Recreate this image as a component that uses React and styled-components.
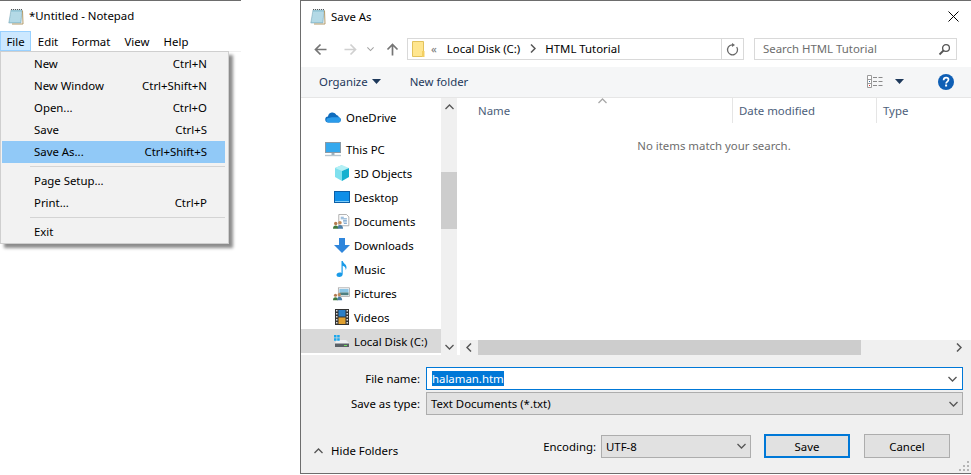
import React from "react";
import styled, { createGlobalStyle } from "styled-components";

const Global = createGlobalStyle`
  html, body { margin: 0; padding: 0; background: #fff; }
  * { box-sizing: border-box; }
  body { font-family: "Noto Sans", "Open Sans", sans-serif; font-size: 11.4px; color: #000; }
`;

const Page = styled.div`
  display: flex;
  width: 971px;
  height: 475px;
  background: #fff;
  overflow: hidden;
`;

/* ---------- Notepad ---------- */
const Notepad = styled.section`
  position: relative;
  width: 241px;
  height: 475px;
  border-top: 1px solid #6d6d6d;
  flex: none;
`;
const NotepadTitle = styled.div`
  display: flex;
  align-items: center;
  gap: 5px;
  height: 30px;
  padding: 0 0 0 8px;
  line-height: 16px;
`;
const MenuBar = styled.div`
  display: flex;
  height: 20px;
`;
const MenuTitle = styled.div`
  display: flex;
  align-items: center;
  justify-content: center;
  width: ${(p) => p.$w}px;
  height: 20px;
  background: ${(p) => (p.$open ? "#cce8ff" : "transparent")};
  border: 1px solid ${(p) => (p.$open ? "#99d1ff" : "transparent")};
`;
const MenuRule = styled.div`
  height: 1px;
  background: #f0f0f0;
`;
const DropMenu = styled.div`
  position: absolute;
  left: 0;
  top: 50px;
  width: 229px;
  height: 193px;
  padding: 1px 3px 0 1px;
  background: #f2f2f2;
  border: 1px solid #cfcfcf;
  box-shadow: 4px 4px 3px rgba(0, 0, 0, 0.45);
`;
const MenuItem = styled.div`
  display: flex;
  align-items: center;
  justify-content: space-between;
  height: 22px;
  padding: 0 18px 1px 32px;
  background: ${(p) => (p.$active ? "#91c9f7" : "transparent")};
`;
const MenuSep = styled.div`
  height: 1px;
  margin: 3px 0 3px 28px;
  background: #d4d4d4;
`;

/* ---------- Dialog ---------- */
const Dialog = styled.section`
  display: flex;
  flex-direction: column;
  width: 671px;
  height: 474px;
  margin-left: 59px;
  flex: none;
  border-top: 1px solid #6d6d6d;
  border-bottom: 1px solid #6d6d6d;
  border-left: 1px solid #6d6d6d;
`;
const DialogTitle = styled.div`
  display: flex;
  align-items: center;
  height: 31px;
  padding: 0 12px 0 9px;
`;
const DialogName = styled.span`
  margin-left: 5px;
  flex: 1;
`;
const NavRow = styled.div`
  display: flex;
  align-items: center;
  height: 35px;
  padding: 6px 14px 7px 12px;
`;
const NavIcons = styled.div`
  display: flex;
  align-items: center;
  width: 94px;
`;
const NavBtn = styled.span`
  display: flex;
  justify-content: center;
  width: ${(p) => p.$w || 16}px;
  margin-right: ${(p) => p.$mr || 0}px;
`;
const AddressBar = styled.div`
  display: flex;
  align-items: center;
  width: 337px;
  height: 22px;
  border: 1px solid #d9d9d9;
  padding-left: 4px;
`;
const Crumb = styled.span`
  margin-left: ${(p) => p.$ml || 0}px;
  padding-bottom: 2px;
  color: ${(p) => p.$c || "#000"};
`;
const RefreshCell = styled.span`
  display: flex;
  align-items: center;
  justify-content: center;
  width: 22px;
  height: 20px;
  margin-left: auto;
  border-left: 1px solid #d9d9d9;
`;
const SearchBox = styled.div`
  display: flex;
  align-items: center;
  justify-content: space-between;
  width: 203px;
  height: 22px;
  margin-left: 10px;
  padding: 0 5px 0 8px;
  border: 1px solid #d9d9d9;
  color: #6d6d6d;
`;
const SearchText = styled.span`
  padding-bottom: 2px;
`;
const Toolbar = styled.div`
  display: flex;
  align-items: center;
  height: 31px;
  padding: 0 17px 1px 18px;
  background: #f5f6f7;
  border-bottom: 1px solid #e6e6e6;
  color: #1e395b;
`;
const ToolButton = styled.span`
  display: flex;
  align-items: center;
  gap: 4px;
  margin-right: 29px;
`;
const ToolRight = styled.div`
  display: flex;
  align-items: center;
  margin-left: auto;
`;
const CaretGap = styled.span`
  width: 12px;
`;
const Body = styled.div`
  display: flex;
  height: 257px;
`;
const NavPane = styled.div`
  width: 140px;
  padding-top: 7px;
  flex: none;
`;
const TreeRow = styled.div`
  display: flex;
  align-items: center;
  gap: 4px;
  height: 24px;
  margin-top: ${(p) => p.$gap || 0}px;
  padding-left: ${(p) => (p.$child ? 32 : 24)}px;
  background: ${(p) => (p.$selected ? "#d9d9d9" : "transparent")};
`;
const TreeIcon = styled.span`
  display: flex;
  justify-content: ${(p) => (p.$wide ? "flex-end" : "center")};
  width: 17px;
  flex: none;
`;
const VScroll = styled.div`
  display: flex;
  flex-direction: column;
  width: 16px;
  background: #f0f0f0;
  flex: none;
`;
const ScrollArrow = styled.span`
  display: flex;
  align-items: center;
  justify-content: center;
  flex: none;
  width: ${(p) => (p.$h ? "18px" : "16px")};
  height: ${(p) => (p.$h ? "15px" : "17px")};
`;
const VThumb = styled.div`
  height: 57px;
  margin-top: 57px;
  margin-bottom: auto;
  background: #cdcdcd;
`;
const FileArea = styled.div`
  display: flex;
  flex-direction: column;
  flex: 1;
  margin-left: 3px;
  min-width: 0;
`;
const HeaderRow = styled.div`
  position: relative;
  display: flex;
  height: 25px;
  color: #4c607a;
`;
const SortMark = styled.span`
  position: absolute;
  left: 138px;
  top: 0;
  line-height: 0;
`;
const HeaderCell = styled.div`
  display: flex;
  align-items: center;
  width: ${(p) => p.$w}px;
  padding-left: ${(p) => p.$pl}px;
  border-right: ${(p) => (p.$last ? "0" : "1px solid #e5e5e5")};
`;
const EmptyNote = styled.div`
  flex: 1;
  padding-top: 15px;
  padding-right: 3px;
  text-align: center;
  color: #6d6d6d;
`;
const HScroll = styled.div`
  display: flex;
  align-items: center;
  height: 15px;
  padding-right: 3px;
  background: #f0f0f0;
`;
const HThumb = styled.div`
  width: 383px;
  height: 15px;
  background: #cdcdcd;
  margin-right: auto;
`;
const Footer = styled.div`
  position: relative;
  flex: 1;
  background: #f0f0f0;
  padding: 12px 8px 0 0;
`;
const FormRow = styled.div`
  display: flex;
  align-items: center;
  height: 23px;
  margin-bottom: 2px;
`;
const FormLabel = styled.label`
  width: 119px;
  margin-right: 6px;
  text-align: right;
`;
const NameInput = styled.div`
  display: flex;
  align-items: center;
  justify-content: space-between;
  flex: 1;
  height: 23px;
  padding: 0 5px;
  background: #fff;
  border: 1px solid #0078d7;
`;
const Selected = styled.span`
  background: #0078d7;
  color: #fff;
  line-height: 15px;
`;
const SelectBox = styled.div`
  display: flex;
  align-items: center;
  justify-content: space-between;
  flex: ${(p) => (p.$w ? "none" : 1)};
  width: ${(p) => (p.$w ? `${p.$w}px` : "auto")};
  height: 23px;
  padding: 0 4px;
  background: #e1e1e1;
  border: 1px solid #adadad;
`;
const Actions = styled.div`
  display: flex;
  align-items: center;
  margin-top: 19px;
  padding: 0 13px 0 13px;
`;
const HideFolders = styled.div`
  display: flex;
  align-items: center;
  gap: 8px;
  margin-top: 9px;
  margin-right: auto;
`;
const EncodingLabel = styled.span`
  margin-right: 5px;
`;
const DialogButton = styled.div`
  display: flex;
  align-items: center;
  justify-content: center;
  width: 86px;
  height: 24px;
  margin-left: ${(p) => p.$ml}px;
  background: #e1e1e1;
  border: ${(p) => (p.$default ? "2px solid #0078d7" : "1px solid #adadad")};
`;
const Grip = styled.span`
  position: absolute;
  right: 1px;
  bottom: 1px;
  line-height: 0;
`;

/* ---------- Icons ---------- */
const NotepadIcon = () => (
  <svg width="16" height="17" viewBox="0 0 16 17">
    <path d="M3 2h11l-1 13H.8z" fill="#9cccdc" stroke="#86aebd" strokeWidth=".6" />
    <path d="M3 5h10.500M2.700 7h10.500M2.400 9h10.500M2.100 11h10.500M1.800 13h10.500" stroke="#d8eef5" strokeWidth=".8" />
    <path d="M14.500 2.500L15 16H4" fill="none" stroke="#b09a6a" />
    <path d="M3 1.500h11" stroke="#555" strokeDasharray="1 1" />
  </svg>
);
const Close = () => (
  <svg width="11" height="11" viewBox="0 0 11 11">
    <path d="M.5.500l10 10M10.500.500l-10 10" stroke="#000" strokeWidth="1" />
  </svg>
);
const Arrow = ({ dir = "left", c = "#7a7a7a" }) => (
  <svg width="13" height="13" viewBox="0 0 13 13" style={{ transform: `rotate(${{ left: 0, right: 180, up: 90 }[dir]}deg)` }}>
    <path d="M12.500 6.500H1.500M6.500 1.500l-5 5 5 5" fill="none" stroke={c} strokeWidth="1.700" />
  </svg>
);
const Chevron = ({ up, c = "#6a6a6a", w = 9 }) => (
  <svg width={w} height="6" viewBox="0 0 9 6" style={{ transform: up ? "rotate(180deg)" : "none" }}>
    <path d="M.5 1l4 4 4-4" fill="none" stroke={c} strokeWidth="1.300" />
  </svg>
);
const SideArrow = ({ left }) => (
  <svg width="6" height="9" viewBox="0 0 6 9" style={{ transform: left ? "rotate(180deg)" : "none" }}>
    <path d="M1 .5l4 4-4 4" fill="none" stroke="#555" strokeWidth="1.500" />
  </svg>
);
const Caret = () => (
  <svg width="9" height="5" viewBox="0 0 9 5">
    <path d="M0 0h9L4.500 5z" fill="#1e395b" />
  </svg>
);
const FolderIcon = () => (
  <svg width="13" height="17" viewBox="0 0 13 17">
    <path d="M.5.500h11V15.500H.5z" fill="#ffe68f" stroke="#e2c25c" />
    <path d="M10 10h2.500v6H10z" fill="#f3cf62" />
  </svg>
);
const Refresh = () => (
  <svg width="13" height="13" viewBox="0 0 13 13">
    <path d="M10.700 4A5 5 0 1 1 6 1.800" fill="none" stroke="#6a6a6a" strokeWidth="1.300" />
    <path d="M6 0v4l3-2z" fill="#6a6a6a" />
  </svg>
);
const SearchIcon = () => (
  <svg width="13" height="13" viewBox="0 0 13 13">
    <circle cx="8" cy="5" r="3.400" fill="none" stroke="#555" strokeWidth="1.300" />
    <path d="M5.500 7.500L1.500 11.500" stroke="#555" strokeWidth="1.800" />
  </svg>
);
const ViewsIcon = () => (
  <svg width="16" height="13" viewBox="0 0 16 13">
    <path d="M.5.500h4v12h-4zM.5 4.500h4M.5 8.500h4" fill="#fff" stroke="#9a9a9a" />
    <path d="M6 2.500h4M11.500 2.500h4M6 6.500h4M11.500 6.500h4M6 10.500h4M11.500 10.500h4" stroke="#8a8a8a" />
    <rect x="2" y="6" width="1" height="1" fill="#3a6ea5" />
    <rect x="2" y="10" width="1" height="1" fill="#d33" />
  </svg>
);
const HelpIcon = () => (
  <svg width="16" height="16" viewBox="0 0 16 16" style={{ marginLeft: 34 }}>
    <circle cx="8" cy="8" r="8" fill="#0f5fb5" />
    <path d="M5.600 6.200C5.700 4.500 6.800 3.700 8.100 3.700c1.400 0 2.400.8 2.400 2 0 1.900-2.400 1.900-2.400 3.800" fill="none" stroke="#fff" strokeWidth="1.700" />
    <rect x="7.100" y="10.500" width="2" height="2" fill="#fff" />
  </svg>
);
const CloudIcon = () => (
  <svg width="17" height="11" viewBox="0 0 17 11">
    <path d="M3.500 10.500a3 3 0 0 1-.5-6 4.500 4.500 0 0 1 8.500-1.500 3.500 3.500 0 0 1 2.500 2.200A2.800 2.800 0 0 1 14 10.500z" fill="#0f6cbd" />
    <path d="M3.500 10.500a2.300 2.300 0 0 1 0-4.600l3.500-.7 6.500 0a2.800 2.800 0 0 1 .5 5.300z" fill="#2a9bea" />
  </svg>
);
const MonitorIcon = () => (
  <svg width="17" height="15" viewBox="0 0 17 15">
    <rect x=".5" y=".5" width="15" height="10" fill="#35a9ee" stroke="#8a9aa6" />
    <path d="M6.500 11h3v2h-3z" fill="#9ab0be" />
    <path d="M0 13.500h16" stroke="#b9c6cf" strokeWidth="1.400" />
  </svg>
);
const CubeIcon = () => (
  <svg width="16" height="16" viewBox="0 0 16 16">
    <path d="M8 0L1 3v9l7 4z" fill="#7fe0ee" />
    <path d="M1 3l7 3 7-3-7-3z" fill="#b5f0f5" />
    <path d="M8 6l7-3v9l-7 4z" fill="#16b0cf" />
  </svg>
);
const DesktopIcon = () => (
  <svg width="16" height="12" viewBox="0 0 16 12">
    <rect x=".5" y=".5" width="15" height="11" fill="#0f8fe8" stroke="#0b5fa8" />
    <path d="M1 10.500h14" stroke="#7fcdf8" />
  </svg>
);
const People = () => (
  <g>
    <circle cx="3.500" cy="12" r="2.200" fill="#b57a50" />
    <path d="M0 19c0-3 1.300-4.300 3.500-4.300S7 16 7 19z" fill="#3f7a3f" />
    <circle cx="9" cy="11" r="2.300" fill="#c08a5c" />
    <path d="M6 19c0-3.500 1.200-5 3-5s4 1.300 4 5z" fill="#4b7fa8" />
  </g>
);
const DocsIcon = () => (
  <svg width="22" height="19" viewBox="0 0 22 19">
    <path d="M7.500.5h10l3 3v11.500h-13z" fill="#fff" stroke="#9a9a9a" />
    <path d="M10 4h4M10 6h8M13 8h5M13 10h5M14 12h4" stroke="#5a8fc0" />
    <People />
  </svg>
);
const DownloadIcon = () => (
  <svg width="16" height="15" viewBox="0 0 16 15">
    <path d="M5 0h6v7h5l-8 8-8-8h5z" fill="#2f86dc" />
  </svg>
);
const MusicIcon = () => (
  <svg width="12" height="16" viewBox="0 0 12 16">
    <path d="M5.500 0h1.300c.3 2.500 3.700 3 3.700 6.500 0 1-.4 1.900-.8 2.500.2-2.500-1.500-3.700-3-4.200V13c0 1.700-1.500 3-3.500 3C1.500 16 .5 15.200.5 14s1.300-2.500 3.200-2.500c.7 0 1.300.1 1.800.4z" fill="#1a9be8" />
  </svg>
);
const PicturesIcon = () => (
  <svg width="24" height="19" viewBox="0 0 24 19">
    <rect x="7.500" y="1.500" width="16" height="12" fill="#fff" stroke="#9a9a9a" />
    <path d="M9 3h13v5H9z" fill="#8cc6e6" />
    <path d="M9 8h13v4H9z" fill="#4d7f82" />
    <People />
  </svg>
);
const VideosIcon = () => (
  <svg width="14" height="16" viewBox="0 0 14 16">
    <rect width="14" height="16" fill="#333" />
    <path d="M1 1h1.500v1.500H1zM1 4h1.500v1.500H1zM1 7h1.500v1.500H1zM1 10h1.500v1.500H1zM1 13h1.500v1.500H1zM11.500 1H13v1.500h-1.500zM11.500 4H13v1.500h-1.500zM11.500 7H13v1.500h-1.500zM11.500 10H13v1.500h-1.500zM11.500 13H13v1.500h-1.500z" fill="#ddd" />
    <rect x="3.500" y="1" width="7" height="6.500" fill="#2a7fc8" />
    <rect x="3.500" y="8.500" width="7" height="6.500" fill="#e0a030" />
  </svg>
);
const DiskIcon = () => (
  <svg width="16" height="13" viewBox="0 0 16 13">
    <path d="M3 5h9l3 3v1H1V8z" fill="#eef0f2" />
    <path d="M0 0h2.500v2.500H0zM3.200 0h2.500v2.500H3.200zM0 3.200h2.500v2.500H0zM3.200 3.200h2.500v2.500H3.200z" fill="#1aa7ec" />
    <rect x="1" y="8.500" width="14" height="3.500" fill="#5a6066" />
    <rect x="10" y="10" width="3" height="1" fill="#6fe05a" />
  </svg>
);
const GripIcon = () => (
  <svg width="11" height="11" viewBox="0 0 11 11" fill="#b5b5b5">
    <path d="M8 0h2v2H8zM4 4h2v2H4zM8 4h2v2H8zM0 8h2v2H0zM4 8h2v2H4zM8 8h2v2H8z" />
  </svg>
);

/* ---------- Data ---------- */
const menus = [["File", 31, true], ["Edit", 34], ["Format", 52], ["View", 40], ["Help", 38]];
const items = [
  ["New", "Ctrl+N"],
  ["New Window", "Ctrl+Shift+N"],
  ["Open...", "Ctrl+O"],
  ["Save", "Ctrl+S"],
  ["Save As...", "Ctrl+Shift+S", true],
  null,
  ["Page Setup...", ""],
  ["Print...", "Ctrl+P"],
  null,
  ["Exit", ""],
];
const tree = [
  { label: "OneDrive", icon: <CloudIcon /> },
  { label: "This PC", icon: <MonitorIcon />, gap: 8 },
  { label: "3D Objects", icon: <CubeIcon />, child: true },
  { label: "Desktop", icon: <DesktopIcon />, child: true },
  { label: "Documents", icon: <DocsIcon />, child: true, wide: true },
  { label: "Downloads", icon: <DownloadIcon />, child: true },
  { label: "Music", icon: <MusicIcon />, child: true },
  { label: "Pictures", icon: <PicturesIcon />, child: true, wide: true },
  { label: "Videos", icon: <VideosIcon />, child: true },
  { label: "Local Disk (C:)", icon: <DiskIcon />, child: true, selected: true },
];

export default function App() {
  return (
    <Page>
      <Global />
      <Notepad>
        <NotepadTitle>
          <NotepadIcon />
          <span>*Untitled - Notepad</span>
        </NotepadTitle>
        <MenuBar>
          {menus.map(([name, w, open]) => (
            <MenuTitle key={name} $w={w} $open={open}>{name}</MenuTitle>
          ))}
        </MenuBar>
        <MenuRule />
        <DropMenu>
          {items.map((it, i) =>
            it ? (
              <MenuItem key={it[0]} $active={it[2]}>
                <span>{it[0]}</span>
                <span>{it[1]}</span>
              </MenuItem>
            ) : (
              <MenuSep key={i} />
            )
          )}
        </DropMenu>
      </Notepad>

      <Dialog>
        <DialogTitle>
          <NotepadIcon />
          <DialogName>Save As</DialogName>
          <Close />
        </DialogTitle>
        <NavRow>
          <NavIcons>
            <NavBtn $w={14} $mr={16}><Arrow c="#757575" /></NavBtn>
            <NavBtn $w={14} $mr={8}><Arrow dir="right" c="#d0d0d0" /></NavBtn>
            <NavBtn $w={10} $mr={10}><Chevron c="#a0a0a0" w={7} /></NavBtn>
            <NavBtn $w={14}><Arrow dir="up" c="#757575" /></NavBtn>
          </NavIcons>
          <AddressBar>
            <FolderIcon />
            <Crumb $ml={6} $c="#777">«</Crumb>
            <Crumb $ml={10}>Local Disk (C:)</Crumb>
            <Crumb $ml={10}><SideArrow /></Crumb>
            <Crumb $ml={9}>HTML Tutorial</Crumb>
            <RefreshCell><Refresh /></RefreshCell>
          </AddressBar>
          <SearchBox>
            <SearchText>Search HTML Tutorial</SearchText>
            <SearchIcon />
          </SearchBox>
        </NavRow>
        <Toolbar>
          <ToolButton>Organize <Caret /></ToolButton>
          <ToolButton>New folder</ToolButton>
          <ToolRight>
            <ViewsIcon />
            <CaretGap />
            <Caret />
            <HelpIcon />
          </ToolRight>
        </Toolbar>
        <Body>
          <NavPane>
            {tree.map((t) => (
              <TreeRow key={t.label} $child={t.child} $gap={t.gap} $selected={t.selected}>
                <TreeIcon $wide={t.wide}>{t.icon}</TreeIcon>
                <span>{t.label}</span>
              </TreeRow>
            ))}
          </NavPane>
          <VScroll>
            <ScrollArrow><Chevron up c="#555" /></ScrollArrow>
            <VThumb />
            <ScrollArrow><Chevron c="#555" /></ScrollArrow>
          </VScroll>
          <FileArea>
            <HeaderRow>
              <SortMark><Chevron up c="#a8a8a8" /></SortMark>
              <HeaderCell $w={273} $pl={18}>Name</HeaderCell>
              <HeaderCell $w={144} $pl={6}>Date modified</HeaderCell>
              <HeaderCell $w={93} $pl={6} $last>Type</HeaderCell>
            </HeaderRow>
            <EmptyNote>No items match your search.</EmptyNote>
            <HScroll>
              <ScrollArrow $h><SideArrow left /></ScrollArrow>
              <HThumb />
              <ScrollArrow $h><SideArrow /></ScrollArrow>
            </HScroll>
          </FileArea>
        </Body>
        <Footer>
          <FormRow>
            <FormLabel>File name:</FormLabel>
            <NameInput>
              <Selected>halaman.htm</Selected>
              <Chevron c="#555" />
            </NameInput>
          </FormRow>
          <FormRow>
            <FormLabel>Save as type:</FormLabel>
            <SelectBox>
              <span>Text Documents (*.txt)</span>
              <Chevron c="#555" />
            </SelectBox>
          </FormRow>
          <Actions>
            <HideFolders>
              <Chevron up c="#555" />
              <span>Hide Folders</span>
            </HideFolders>
            <EncodingLabel>Encoding:</EncodingLabel>
            <SelectBox $w={150}>
              <span>UTF-8</span>
              <Chevron c="#555" />
            </SelectBox>
            <DialogButton $ml={13} $default>Save</DialogButton>
            <DialogButton $ml={14}>Cancel</DialogButton>
          </Actions>
          <Grip><GripIcon /></Grip>
        </Footer>
      </Dialog>
    </Page>
  );
}
